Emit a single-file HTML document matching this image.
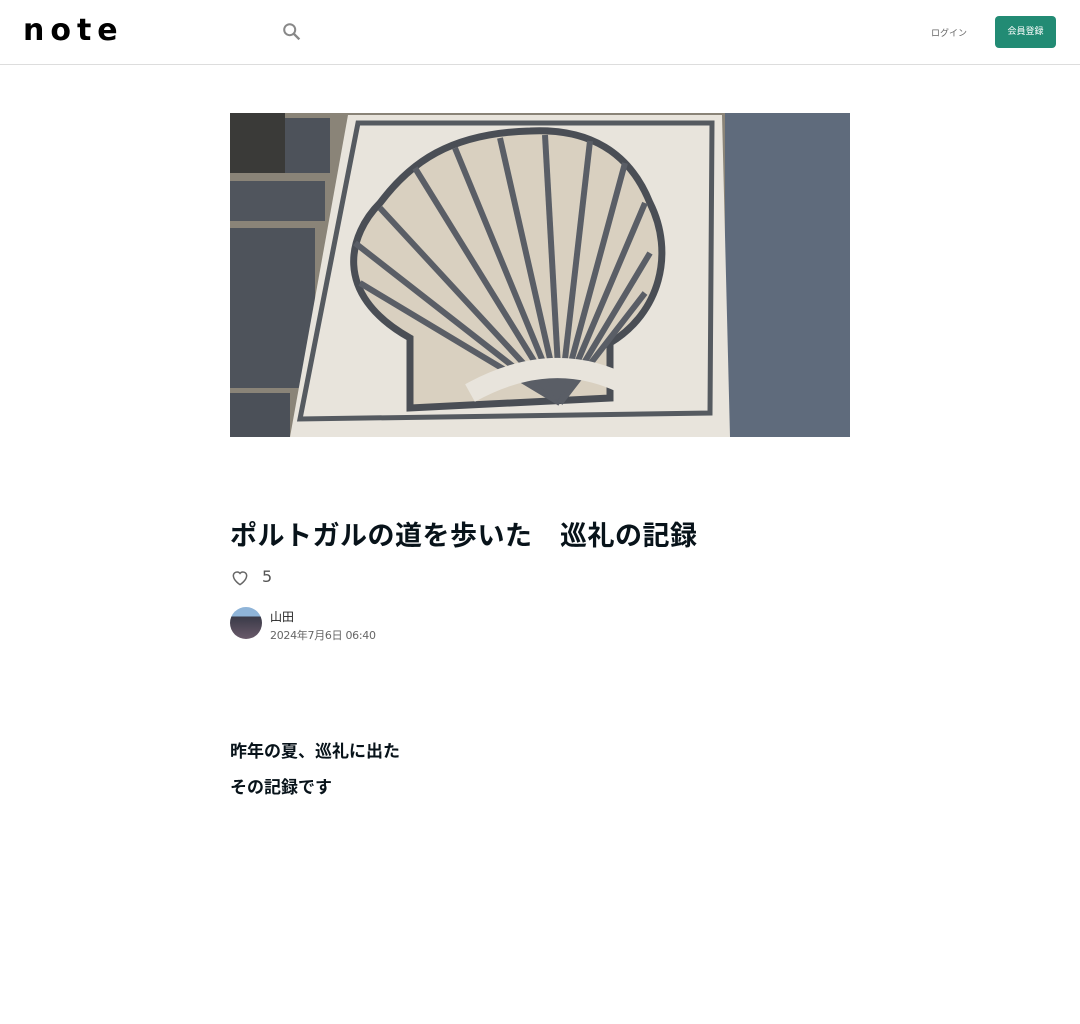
<!DOCTYPE html>
<html><head><meta charset="utf-8"><style>
*{margin:0;padding:0;box-sizing:border-box}
body{width:1080px;height:1024px;background:#fff;font-family:"DejaVu Sans","Noto Sans CJK JP",sans-serif;color:#08131a;position:relative;overflow:hidden}
.hdr{position:absolute;left:0;top:0;width:1080px;height:65px;border-bottom:1px solid #ddd}
.logo{position:absolute;left:23px;top:13px;font:bold 30px "DejaVu Sans",sans-serif;letter-spacing:6px;color:#000}
.login{position:absolute;left:931px;top:26px;font-size:9px;color:#666}
.reg{position:absolute;left:995px;top:16px;width:61px;height:32px;background:#228b74;border-radius:4px;color:#fff;font-size:9px;text-align:center;line-height:32px}
.img{position:absolute;left:230px;top:113px;width:620px;height:324px;overflow:hidden}
h1{position:absolute;left:230px;top:514px;font-size:27px;letter-spacing:0.5px;font-weight:bold;font-family:"Noto Sans CJK JP",sans-serif;white-space:nowrap;line-height:40px;color:#08131a}
.like{position:absolute;left:230px;top:567px;font-size:16px;color:#555}
.av{position:absolute;left:230px;top:607px;width:32px;height:32px;border-radius:50%;background:linear-gradient(#8fb4d8 0 30%,#3a3a48 30%,#6a5a6a)}
.name{position:absolute;left:270px;top:608px;font-size:12px;color:#222}
.date{position:absolute;left:270px;top:627px;font-size:11px;color:#666;letter-spacing:-.3px}
.p{position:absolute;left:230px;font-size:17px;font-weight:bold;font-family:"Noto Sans CJK JP",sans-serif;color:#08131a}
</style></head><body>
<div class="hdr">
<div class="logo">note</div>
<svg style="position:absolute;left:281px;top:21px" width="22" height="22" viewBox="0 0 24 24"><circle cx="9.5" cy="9.5" r="6" fill="none" stroke="#888" stroke-width="2.2"/><path d="M14 14l6 6" stroke="#888" stroke-width="2.6"/></svg>
<div class="login">ログイン</div>
<div class="reg">会員登録</div>
</div>
<div class="img"><svg width="620" height="324" viewBox="0 0 620 324">
<rect width="620" height="324" fill="#8a8478"/>
<rect x="0" y="0" width="55" height="60" fill="#3a3a38"/>
<rect x="55" y="5" width="45" height="55" fill="#4d525a"/>
<rect x="0" y="68" width="95" height="40" fill="#50555d"/>
<rect x="0" y="115" width="85" height="160" fill="#4e535b"/>
<rect x="0" y="280" width="60" height="44" fill="#4b5058"/>
<rect x="495" y="0" width="125" height="324" fill="#5f6b7c"/>
<polygon points="118,2 492,2 500,324 60,324" fill="#e8e4dc"/>
<polygon points="128,10 482,10 480,300 70,306" fill="none" stroke="#555a60" stroke-width="5"/>
<path d="M180 295 L180 225 C100 180 120 120 150 90 C180 50 220 20 300 18 C360 15 400 40 420 90 C445 140 430 200 380 230 L380 285 Z" fill="#d9d0c0" stroke="#4a4e55" stroke-width="7"/>
<g stroke="#5a5e66" stroke-width="6" fill="none">
<path d="M330 290 L125 130"/><path d="M330 290 L130 170"/><path d="M330 290 L150 95"/><path d="M330 290 L185 55"/><path d="M330 290 L225 35"/><path d="M330 290 L270 25"/><path d="M330 290 L315 22"/><path d="M330 290 L360 28"/><path d="M330 290 L395 50"/><path d="M330 290 L415 90"/><path d="M330 290 L420 140"/><path d="M330 290 L415 180"/></g>
<path d="M240 280 Q330 230 410 280" stroke="#e8e4dc" stroke-width="20" fill="none"/>
</svg></div>
<h1>ポルトガルの道を歩いた　巡礼の記録</h1>
<div class="like"><svg width="20" height="20" viewBox="0 0 24 24" style="vertical-align:middle;margin-right:12px"><path d="M12 20s-8-5-8-11a4.5 4.5 0 0 1 8-2.5A4.5 4.5 0 0 1 20 9c0 6-8 11-8 11z" fill="none" stroke="#666" stroke-width="1.8"/></svg>5</div>
<div class="av"></div>
<div class="name">山田</div>
<div class="date">2024年7月6日 06:40</div>
<div class="p" style="top:737px">昨年の夏、巡礼に出た</div>
<div class="p" style="top:773px">その記録です</div>
</body></html>
